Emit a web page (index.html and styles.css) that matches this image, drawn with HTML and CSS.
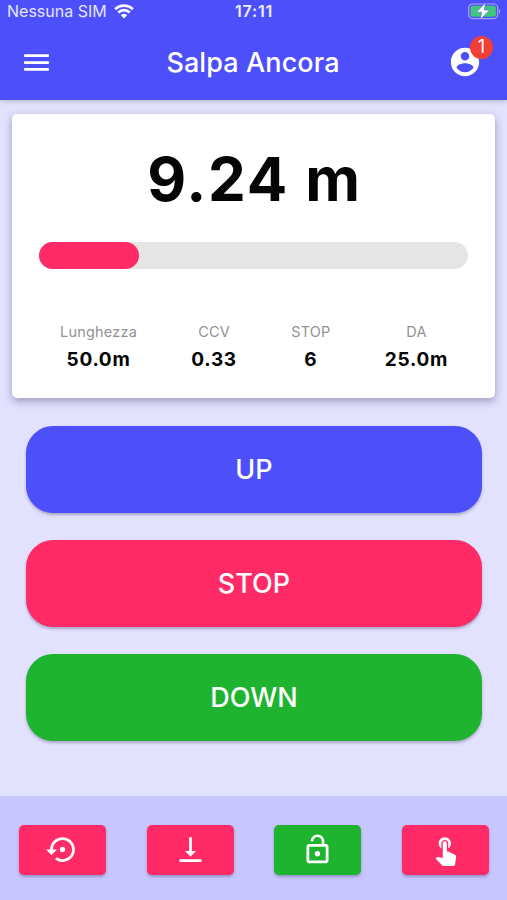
FILE: index.html
```html
<!DOCTYPE html>
<html lang="it">
<head>
  <meta charset="UTF-8" />
  <meta name="viewport" content="width=device-width, initial-scale=1">
  <title>Salpa Ancora</title>
  <link rel="stylesheet" href="styles.css">
</head>
<body>
  <div class="app">
    <header class="header">
      <div class="status-bar">
        <div class="carrier">
          <span>Nessuna SIM</span>
          <svg class="wifi" viewBox="0 0 20 15">
            <path d="M1.2 5.2a12.5 12.5 0 0 1 17.6 0M4.3 8.5a8 8 0 0 1 11.4 0" fill="none" stroke="currentColor" stroke-width="2.7"/>
            <path d="M10 14.6l-3.2-3.4a4.7 4.7 0 0 1 6.4 0z" fill="currentColor"/>
          </svg>
        </div>
        <span class="clock">17:11</span>
        <svg class="battery" viewBox="0 0 33 18">
          <rect x="0.7" y="2" width="29" height="14.6" rx="4" fill="none" stroke="#a3a3fb" stroke-width="1.2"/>
          <rect x="2.5" y="3.8" width="25.4" height="11" rx="2.5" fill="#3fc878"/>
          <path d="M31 7v4.8c1.6-.8 1.6-4 0-4.8z" fill="#a3a3fb"/>
          <path d="M17.6.8L8.4 10.2h5.4L12 17.8 21.6 8h-5.4z" fill="#fff" stroke="#4d4ffa" stroke-width=".5"/>
        </svg>
      </div>
      <div class="top-bar">
        <button class="icon-button" aria-label="Menu">
          <svg class="icon" viewBox="0 0 24 24"><path d="M3 18h18v-2H3v2zm0-5h18v-2H3v2zm0-7v2h18V6H3z"/></svg>
        </button>
        <h1>Salpa Ancora</h1>
        <button class="icon-button profile" aria-label="Account">
          <svg class="icon" viewBox="0 0 24 24"><path d="M12 2C6.48 2 2 6.48 2 12s4.48 10 10 10 10-4.48 10-10S17.52 2 12 2zm0 3c1.66 0 3 1.34 3 3s-1.34 3-3 3-3-1.34-3-3 1.34-3 3-3zm0 14.2c-2.5 0-4.71-1.28-6-3.22.03-1.99 4-3.08 6-3.08 1.99 0 5.97 1.09 6 3.08-1.29 1.94-3.5 3.22-6 3.22z"/></svg>
          <span class="badge">1</span>
        </button>
      </div>
    </header>

    <main>
      <section class="card">
        <div class="length">9.24 m</div>
        <div class="progress"><div class="progress-fill"></div></div>
        <div class="stats">
          <div class="stat"><span class="label">Lunghezza</span><span class="value">50.0m</span></div>
          <div class="stat"><span class="label">CCV</span><span class="value">0.33</span></div>
          <div class="stat"><span class="label">STOP</span><span class="value">6</span></div>
          <div class="stat"><span class="label">DA</span><span class="value">25.0m</span></div>
        </div>
      </section>

      <div class="controls">
        <button class="control blue">UP</button>
        <button class="control red">STOP</button>
        <button class="control green">DOWN</button>
      </div>
    </main>

    <footer class="bottom-bar">
      <button class="action red" aria-label="Reset">
        <svg class="icon" viewBox="0 0 24 24"><path d="M14 12c0-1.1-.9-2-2-2s-2 .9-2 2 .9 2 2 2 2-.9 2-2zm-2-9c-4.97 0-9 4.03-9 9H0l4 4 4-4H5c0-3.87 3.13-7 7-7s7 3.13 7 7-3.13 7-7 7c-1.51 0-2.91-.49-4.06-1.3l-1.42 1.44C8.04 20.3 9.94 21 12 21c4.97 0 9-4.03 9-9s-4.03-9-9-9z"/></svg>
      </button>
      <button class="action red" aria-label="Fondo">
        <svg class="icon" viewBox="0 0 24 24"><path d="M16 13h-3V3h-2v10H8l4 4 4-4zM4 19v2h16v-2H4z"/></svg>
      </button>
      <button class="action green" aria-label="Sblocca">
        <svg class="icon" viewBox="0 0 24 24"><path d="M12 17c1.1 0 2-.9 2-2s-.9-2-2-2-2 .9-2 2 .9 2 2 2zm6-9h-1V6c0-2.76-2.24-5-5-5S7 3.24 7 6h1.9c0-1.71 1.39-3.1 3.1-3.1 1.71 0 3.1 1.39 3.1 3.1v2H6c-1.1 0-2 .9-2 2v10c0 1.1.9 2 2 2h12c1.1 0 2-.9 2-2V10c0-1.1-.9-2-2-2zm0 12H6V10h12v10z"/></svg>
      </button>
      <button class="action red" aria-label="Manuale">
        <svg class="icon" viewBox="0 0 24 24"><path d="M9 11.24V7.5C9 6.12 10.12 5 11.5 5S14 6.12 14 7.5v3.74c1.21-.81 2-2.18 2-3.74C16 5.01 13.99 3 11.5 3S7 5.01 7 7.5c0 1.56.79 2.93 2 3.74zm9.84 4.63l-4.54-2.26c-.17-.07-.35-.11-.54-.11H13v-6c0-.83-.67-1.5-1.5-1.5S10 6.67 10 7.5v10.74l-3.43-.72c-.08-.01-.15-.03-.24-.03-.31 0-.59.13-.79.33l-.79.8 4.94 4.94c.27.27.65.44 1.06.44h6.79c.75 0 1.33-.55 1.44-1.28l.75-5.27c.01-.07.02-.14.02-.2 0-.62-.38-1.16-.91-1.38z"/></svg>
      </button>
    </footer>
  </div>
</body>
</html>
```
FILE: styles.css
```css
* {
  box-sizing: border-box;
}

body {
  margin: 0;
  font-family: Inter, "Liberation Sans", sans-serif;
  background-color: #e2e2fe;
  color: #050505;
}

button {
  border: none;
  padding: 0;
  font-family: inherit;
  color: white;
  cursor: pointer;
}

.app {
  display: flex;
  flex-direction: column;
  height: 100vh;
}

/* Header */
.header {
  height: 100px;
  background-color: #4d4ffa;
  color: white;
  box-shadow: 0 1px 5px rgba(0, 0, 0, 0.22);
}

.status-bar {
  display: grid;
  grid-template-columns: 1fr auto 1fr;
  align-items: center;
  height: 24px;
  padding: 0 6px 2px 7px;
  font-size: 16px;
}

.carrier {
  display: flex;
  align-items: center;
  gap: 7px;
  color: #e4e4ff;
}

.wifi {
  width: 20px;
  height: 15px;
  color: white;
}

.clock {
  font-weight: 600;
  letter-spacing: 0.8px;
  color: #f0f0ff;
}

.battery {
  width: 33px;
  height: 18px;
  justify-self: end;
}

.top-bar {
  display: flex;
  justify-content: space-between;
  align-items: center;
  height: 76px;
  padding: 0 25px 0 20px;
}

.top-bar h1 {
  margin: 0;
  padding: 1px 0 0 5px;
  font-size: 27px;
  font-weight: 500;
  letter-spacing: 0.1px;
}

.icon {
  display: block;
  width: 33px;
  height: 33px;
  fill: currentColor;
}

.icon-button {
  position: relative;
  background: none;
}

.profile .icon {
  width: 34px;
  height: 34px;
}

.badge {
  position: absolute;
  top: -9px;
  right: -11px;
  width: 23px;
  height: 23px;
  border-radius: 50%;
  background-color: #f23e36;
  font-size: 18px;
  line-height: 22px;
  text-align: center;
}

/* Chain length card */
.card {
  height: 284px;
  margin: 14px 12px 0;
  padding: 28px 27px 0;
  background-color: white;
  border-radius: 5px;
  box-shadow: 0 3px 8px rgba(40, 30, 80, 0.38);
}

.length {
  height: 74px;
  padding-left: 2px;
  line-height: 74px;
  font-size: 60px;
  font-weight: 700;
  text-align: center;
  letter-spacing: 1.8px;
}

.progress {
  height: 27px;
  margin-top: 26px;
  border-radius: 14px;
  background-color: #e5e5e5;
}

.progress-fill {
  width: 100px;
  height: 100%;
  border-radius: 14px;
  background-color: #ff2a66;
}

.stats {
  display: flex;
  justify-content: space-between;
  margin-top: 50px;
  padding: 0 20px 0 21px;
}

.stat {
  display: flex;
  flex-direction: column;
  align-items: center;
}

.label {
  height: 27px;
  line-height: 26px;
  font-size: 14.5px;
  letter-spacing: 0.2px;
  color: #929292;
}

.value {
  height: 28px;
  line-height: 28px;
  font-size: 19px;
  font-weight: 700;
  letter-spacing: 0.7px;
}

/* Windlass controls */
.controls {
  display: flex;
  flex-direction: column;
  gap: 27px;
  padding: 28px 25px 0 26px;
}

.control {
  height: 87px;
  border-radius: 27px;
  font-size: 27px;
  font-weight: 500;
  box-shadow: 0 2px 3px rgba(40, 30, 80, 0.3);
}

.blue {
  background-color: #4d4ffa;
}

.red {
  background-color: #ff2a66;
}

.green {
  background-color: #1eb430;
}

/* Bottom actions */
.bottom-bar {
  display: flex;
  justify-content: space-between;
  height: 104px;
  margin-top: auto;
  padding: 29px 18px 0 19px;
  background-color: #c8c6fe;
}

.action {
  display: flex;
  justify-content: center;
  align-items: center;
  width: 87px;
  height: 50px;
  padding-bottom: 1px;
  border-radius: 5px;
  box-shadow: 0 2px 3px rgba(40, 30, 80, 0.3);
}
```
